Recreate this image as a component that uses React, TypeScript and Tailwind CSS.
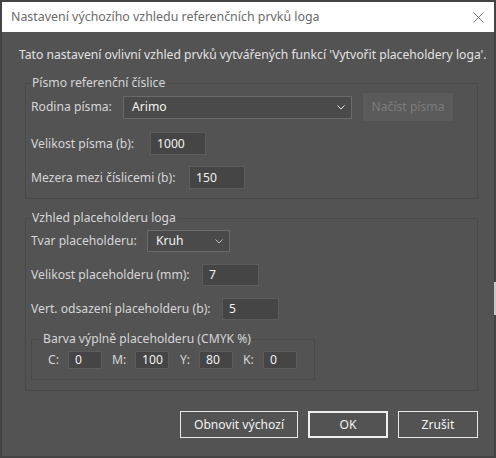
import type { FC, ReactNode } from "react";

const Chevron: FC<{ className?: string }> = ({ className }) => (
    <svg width="8" height="5" viewBox="0 0 8 5" className={className} fill="none">
        <path d="M0.5 0.5 L4 4 L7.5 0.5" stroke="currentColor" strokeWidth="1" />
    </svg>
);

const TextBox: FC<{ value: string; className: string }> = ({ value, className }) => (
    <div className={`flex items-center bg-[#454545] border border-[#5c5c5c] pl-[6px] text-[#f2f2f2] ${className}`}>
        {value}
    </div>
);

const Row: FC<{ label: string; labelWidth: string; children: ReactNode; className?: string }> = ({ label, labelWidth, children, className }) => (
    <div className={`flex items-center ${className ?? ""}`}>
        <span className={`shrink-0 whitespace-nowrap ${labelWidth}`}>{label}</span>
        {children}
    </div>
);

const DialogButton: FC<{ label: string; className: string }> = ({ label, className }) => (
    <button className={`h-[27px] flex items-center justify-center bg-[#535353] text-[#f2f2f2] ${className}`}>
        {label}
    </button>
);

export default function App() {
    return (
        <div
            className="relative w-[496px] h-[458px] bg-[#535353] border-2 border-[#444444] flex flex-col text-[12.15px] leading-[16px] text-[#d6d6d6]"
            style={{ fontFamily: '"Noto Sans", "Open Sans", sans-serif' }}
        >
            {/* title bar */}
            <div className="h-[30px] shrink-0 bg-white flex items-center justify-between pl-[9px] pr-[10px]">
                <span className="text-[#6b6b6b] text-[12.4px]">Nastavení výchozího vzhledu referenčních prvků loga</span>
                <svg width="11" height="11" viewBox="0 0 11 11" className="text-[#7a7a7a]">
                    <path d="M0.5 0.5 L10.5 10.5 M10.5 0.5 L0.5 10.5" stroke="currentColor" strokeWidth="1" />
                </svg>
            </div>

            <div className="flex-1 flex flex-col pl-[17px] pr-[16px] pt-[15px]">
                <p className="text-[#e2e2e2] whitespace-nowrap">
                    Tato nastavení ovlivní vzhled prvků vytvářených funkcí 'Vytvořit placeholdery loga'.
                </p>

                {/* Písmo */}
                <fieldset className="mt-[12px] ml-[6px] border border-[#494949] pl-[5px] pt-[2px] pb-[9px]">
                    <legend className="px-[1px]">Písmo referenční číslice</legend>
                    <Row label="Rodina písma:" labelWidth="w-[92px]" className="h-[28px]">
                        <div className="w-[229px] h-[23px] flex items-center justify-between bg-[#4a4a4a] border border-[#6a6a6a] pl-[8px] pr-[6px] text-[#f2f2f2]">
                            <span>Arimo</span>
                            <Chevron className="text-[#e6e6e6]" />
                        </div>
                        <button className="ml-[11px] w-[90px] h-[28px] bg-[#5a5a5a] text-[#7c7c7c] flex items-center justify-center">
                            Načíst písma
                        </button>
                    </Row>
                    <Row label="Velikost písma (b):" labelWidth="w-[119px]" className="mt-[11px]">
                        <TextBox value="1000" className="w-[56px] h-[23px]" />
                    </Row>
                    <Row label="Mezera mezi číslicemi (b):" labelWidth="w-[158px]" className="mt-[11px]">
                        <TextBox value="150" className="w-[56px] h-[23px]" />
                    </Row>
                </fieldset>

                {/* Vzhled placeholderu */}
                <fieldset className="mt-[11px] ml-[6px] border border-[#494949] pl-[5px] pt-[4px] pb-[10px]">
                    <legend className="px-[1px]">Vzhled placeholderu loga</legend>
                    <Row label="Tvar placeholderu:" labelWidth="w-[116px]">
                        <div className="w-[83px] h-[22px] flex items-center justify-between bg-[#4a4a4a] border border-[#6a6a6a] pl-[8px] pr-[6px] text-[#f2f2f2]">
                            <span>Kruh</span>
                            <Chevron className="text-[#bdbdbd]" />
                        </div>
                    </Row>
                    <Row label="Velikost placeholderu (mm):" labelWidth="w-[171px]" className="mt-[12px]">
                        <TextBox value="7" className="w-[57px] h-[22px]" />
                    </Row>
                    <Row label="Vert. odsazení placeholderu (b):" labelWidth="w-[191px]" className="mt-[12px]">
                        <TextBox value="5" className="w-[57px] h-[22px]" />
                    </Row>

                    <fieldset className="mt-[11px] w-[284px] border border-[#494949] pl-[10px] pt-[4px] pb-[10px]">
                        <legend className="px-[1px]">Barva výplně placeholderu (CMYK %)</legend>
                        <div className="flex items-center ml-[6px]">
                            <span className="w-[20px]">C:</span>
                            <TextBox value="0" className="w-[34px] h-[18px]" />
                            <span className="ml-[10px] w-[23px]">M:</span>
                            <TextBox value="100" className="w-[34px] h-[18px]" />
                            <span className="ml-[11px] w-[19px]">Y:</span>
                            <TextBox value="80" className="w-[34px] h-[18px]" />
                            <span className="ml-[10px] w-[20px]">K:</span>
                            <TextBox value="0" className="w-[34px] h-[18px]" />
                        </div>
                    </fieldset>
                </fieldset>

                <div className="mt-[20px] flex justify-end gap-[10px]">
                    <DialogButton label="Obnovit výchozí" className="w-[118px] border border-[#e8e8e8]" />
                    <DialogButton label="OK" className="w-[80px] border-2 border-[#f0f0f0]" />
                    <DialogButton label="Zrušit" className="w-[80px] border border-[#e8e8e8]" />
                </div>
            </div>

            {/* edge highlight */}
            <div className="absolute right-[-2px] top-[280px] w-[2px] h-[33px] bg-[#c8c8c8]" />
        </div>
    );
}
